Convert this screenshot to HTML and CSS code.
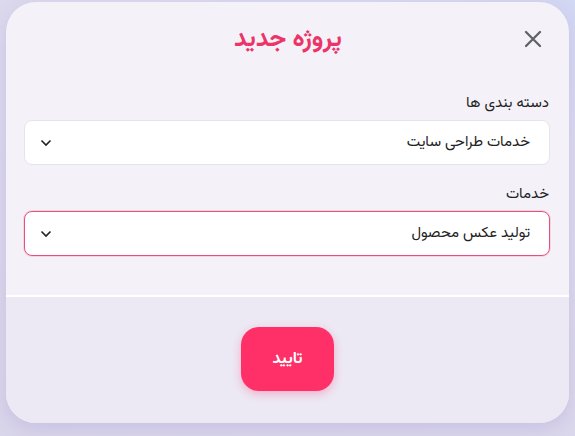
FILE: index.html
```html
<!DOCTYPE html>
<html lang="fa" dir="rtl">

<head>
    <meta charset="UTF-8">
    <meta name="viewport" content="width=device-width, initial-scale=1.0">
    <title>پروژه جدید</title>
    <link rel="stylesheet" href="styles.css">
</head>

<body>
    <div class="modal">
        <div class="modal-header">
            <button class="close" aria-label="بستن">
                <svg width="18" height="18" viewBox="0 0 18 18">
                    <path d="M2 2 L16 16 M16 2 L2 16" stroke="#5f6368" stroke-width="2.3" stroke-linecap="round" />
                </svg>
            </button>
            <h2 class="modal-title">پروژه جدید</h2>
            <span></span>
        </div>

        <div class="modal-body">
            <label class="field-label">دسته بندی ها</label>
            <div class="select">
                <span>خدمات طراحی سایت</span>
                <svg width="12" height="8" viewBox="0 0 12 8">
                    <path d="M1.5 1.5 L6 6 L10.5 1.5" fill="none" stroke="#222" stroke-width="1.6" />
                </svg>
            </div>

            <label class="field-label">خدمات</label>
            <div class="select active">
                <span>تولید عکس محصول</span>
                <svg width="12" height="8" viewBox="0 0 12 8">
                    <path d="M1.5 1.5 L6 6 L10.5 1.5" fill="none" stroke="#222" stroke-width="1.6" />
                </svg>
            </div>
        </div>

        <div class="modal-footer">
            <button class="btn-submit">تایید</button>
        </div>
    </div>
</body>

</html>
```

FILE: styles.css
```css
body {
    margin: 0;
    height: 436px;
    overflow: hidden;
    font-family: 'Vazirmatn', 'Noto Sans Arabic', 'DejaVu Sans', sans-serif;
    background: linear-gradient(200deg, #d2d7f3 0%, #dcd9ee 25%, #d9d5ea 100%);
    color: #222222;
}

.modal {
    margin: 2px 6px 0 6px;
    height: 421px;
    border-radius: 30px;
    background: #f4f2f8;
    overflow: hidden;
    display: flex;
    flex-direction: column;
    box-shadow: 0 6px 16px rgba(150, 140, 200, 0.25);
}

.modal-header {
    display: grid;
    grid-template-columns: 1fr auto 1fr;
    align-items: center;
    height: 74px;
    padding: 0 27px 0 28px;
}

.modal-title {
    margin: 0;
    color: #ec3468;
    font-size: 25px;
    font-weight: bold;
}

.close {
    justify-self: start;
    background: none;
    border: none;
    padding: 0;
    width: 18px;
    height: 18px;
    cursor: pointer;
}

.modal-body {
    padding: 16px 19px 39px 18px;
}

.field-label {
    display: block;
    font-size: 15px;
    line-height: 24px;
    margin-bottom: 4px;
    padding-right: 1px;
}

.select {
    display: flex;
    align-items: center;
    justify-content: space-between;
    height: 43px;
    padding: 0 19px 0 15px;
    background: #ffffff;
    border: 1px solid #e6e4ea;
    border-radius: 8px;
    font-size: 15px;
    margin-bottom: 18px;
}

.select:last-child {
    margin-bottom: 0;
}

.select.active {
    border-color: #e8507c;
    box-shadow: 0 0 0 1px rgba(236, 52, 104, 0.15);
}

.modal-footer {
    flex: 1;
    border-top: 2px solid #ffffff;
    background: #ece8f4;
    display: flex;
    justify-content: center;
    padding-top: 30px;
}

.btn-submit {
    width: 93px;
    height: 64px;
    border: none;
    border-radius: 18px;
    background: #ff2f68;
    color: #ffffff;
    font-family: inherit;
    font-size: 16px;
    font-weight: bold;
    cursor: pointer;
    box-shadow: 0 3px 8px rgba(255, 47, 104, 0.3);
}
```
